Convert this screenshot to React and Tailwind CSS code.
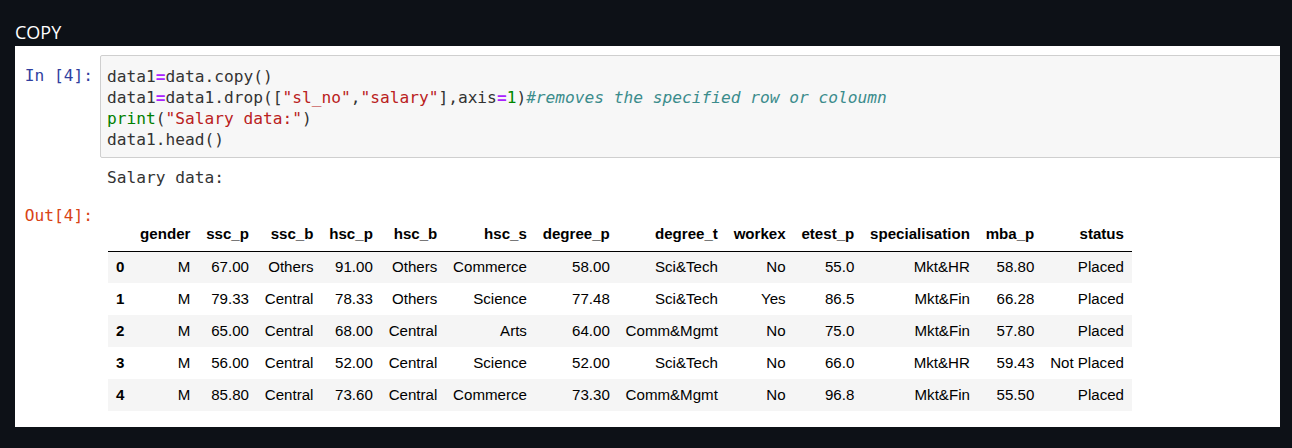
import React from "react";

const cols = ["gender","ssc_p","ssc_b","hsc_p","hsc_b","hsc_s","degree_p","degree_t","workex","etest_p","specialisation","mba_p","status"];
const rows = [
  ["M","67.00","Others","91.00","Others","Commerce","58.00","Sci&Tech","No","55.0","Mkt&HR","58.80","Placed"],
  ["M","79.33","Central","78.33","Others","Science","77.48","Sci&Tech","Yes","86.5","Mkt&Fin","66.28","Placed"],
  ["M","65.00","Central","68.00","Central","Arts","64.00","Comm&Mgmt","No","75.0","Mkt&Fin","57.80","Placed"],
  ["M","56.00","Central","52.00","Central","Science","52.00","Sci&Tech","No","66.0","Mkt&HR","59.43","Not Placed"],
  ["M","85.80","Central","73.60","Central","Commerce","73.30","Comm&Mgmt","No","96.8","Mkt&Fin","55.50","Placed"],
];

const mono = { fontFamily: '"DejaVu Sans Mono", "Liberation Mono", monospace' };

function Op({ children }) {
  return <span className="text-[#aa22ff] font-bold">{children}</span>;
}
function Str({ children }) {
  return <span className="text-[#ba2121]">{children}</span>;
}

export default function App() {
  return (
    <div className="w-[1292px] h-[448px] bg-[#0d1117] overflow-hidden pt-[20px]">
      <div className="ml-[15px] h-[24px] leading-[24px] text-[18px] text-white mb-[2px]" style={{ fontFamily: '"Open Sans", sans-serif' }}>
        COPY
      </div>
      <div className="ml-[15px] w-[1265px] h-[381px] bg-white overflow-hidden pt-[9px]">
        {/* input */}
        <div className="flex">
          <div className="w-[85px] shrink-0 text-right pr-[7px] pt-[10px] text-[16.2px] leading-[21px] text-[#303f9f]" style={mono}>
            In&nbsp;[4]:
          </div>
          <div className="w-[1200px] shrink-0 bg-[#f7f7f7] border border-[#cfcfcf] rounded-[2px] pt-[10px] pb-[7px] pl-[6px] text-[16.2px] leading-[21px] text-[#333] whitespace-pre" style={mono}>
            <div>data1<Op>=</Op>data.copy()</div>
            <div>
              data1<Op>=</Op>data1.drop([<Str>"sl_no"</Str>,<Str>"salary"</Str>],axis<Op>=</Op><span className="text-[#008800]">1</span>)<span className="italic text-[#3b8c8c]">#removes the specified row or coloumn</span>
            </div>
            <div><span className="text-[#008000]">print</span>(<Str>"Salary data:"</Str>)</div>
            <div>data1.head()</div>
          </div>
        </div>
        {/* stdout */}
        <div className="flex mt-[9px]">
          <div className="w-[85px] shrink-0" />
          <div className="pl-[7px] text-[16.2px] leading-[21px] text-[#333] whitespace-pre" style={mono}>
            Salary data:
          </div>
        </div>
        {/* out */}
        <div className="flex mt-[17px]">
          <div className="w-[85px] shrink-0 text-right pr-[7px] text-[16.2px] leading-[21px] text-[#d84315]" style={mono}>
            Out[4]:
          </div>
          <div className="pl-[8px] pt-[14px]">
            <table className="border-collapse text-[15.1px] text-black" style={{ fontFamily: '"Liberation Sans", Arial, sans-serif' }}>
              <thead>
                <tr className="border-b border-black">
                  <th className="px-[7.9px] h-[32px] text-left font-bold"></th>
                  {cols.map((c) => (
                    <th key={c} className="px-[7.9px] h-[32px] text-right font-bold whitespace-nowrap">{c}</th>
                  ))}
                </tr>
              </thead>
              <tbody>
                {rows.map((r, i) => (
                  <tr key={i} className={i % 2 === 0 ? "bg-[#f5f5f5]" : "bg-white"}>
                    <th className="px-[7.9px] h-[32px] text-left font-bold">{i}</th>
                    {r.map((v, j) => (
                      <td key={j} className="px-[7.9px] h-[32px] text-right whitespace-nowrap">{v}</td>
                    ))}
                  </tr>
                ))}
              </tbody>
            </table>
          </div>
        </div>
      </div>
    </div>
  );
}
